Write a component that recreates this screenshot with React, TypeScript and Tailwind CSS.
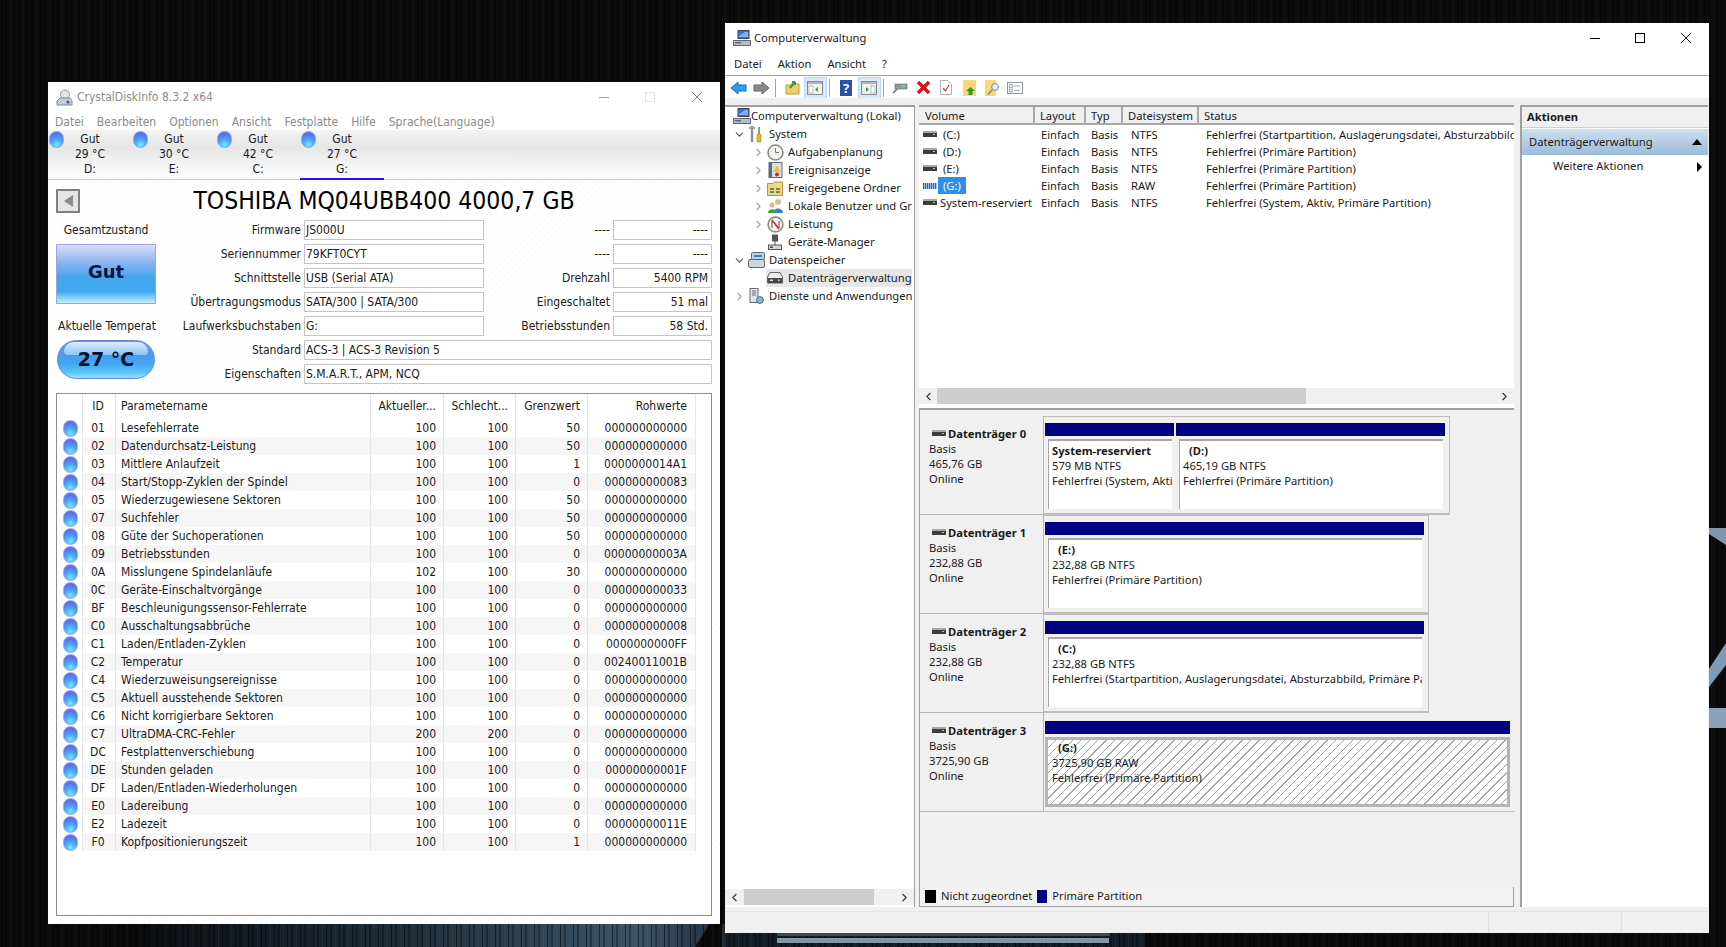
import type { ReactNode } from 'react';
import { ChevronDown, ChevronRight, ChevronLeft } from 'lucide-react';

type SmartRow = [string, string, string, string, string, string];

const smartRows: SmartRow[] = [
  ['01', 'Lesefehlerrate', '100', '100', '50', '000000000000'],
  ['02', 'Datendurchsatz-Leistung', '100', '100', '50', '000000000000'],
  ['03', 'Mittlere Anlaufzeit', '100', '100', '1', '0000000014A1'],
  ['04', 'Start/Stopp-Zyklen der Spindel', '100', '100', '0', '000000000083'],
  ['05', 'Wiederzugewiesene Sektoren', '100', '100', '50', '000000000000'],
  ['07', 'Suchfehler', '100', '100', '50', '000000000000'],
  ['08', 'Güte der Suchoperationen', '100', '100', '50', '000000000000'],
  ['09', 'Betriebsstunden', '100', '100', '0', '00000000003A'],
  ['0A', 'Misslungene Spindelanläufe', '102', '100', '30', '000000000000'],
  ['0C', 'Geräte-Einschaltvorgänge', '100', '100', '0', '000000000033'],
  ['BF', 'Beschleunigungssensor-Fehlerrate', '100', '100', '0', '000000000000'],
  ['C0', 'Ausschaltungsabbrüche', '100', '100', '0', '000000000008'],
  ['C1', 'Laden/Entladen-Zyklen', '100', '100', '0', '0000000000FF'],
  ['C2', 'Temperatur', '100', '100', '0', '00240011001B'],
  ['C4', 'Wiederzuweisungsereignisse', '100', '100', '0', '000000000000'],
  ['C5', 'Aktuell ausstehende Sektoren', '100', '100', '0', '000000000000'],
  ['C6', 'Nicht korrigierbare Sektoren', '100', '100', '0', '000000000000'],
  ['C7', 'UltraDMA-CRC-Fehler', '200', '200', '0', '000000000000'],
  ['DC', 'Festplattenverschiebung', '100', '100', '0', '000000000000'],
  ['DE', 'Stunden geladen', '100', '100', '0', '00000000001F'],
  ['DF', 'Laden/Entladen-Wiederholungen', '100', '100', '0', '000000000000'],
  ['E0', 'Ladereibung', '100', '100', '0', '000000000000'],
  ['E2', 'Ladezeit', '100', '100', '0', '00000000011E'],
  ['F0', 'Kopfpositionierungszeit', '100', '100', '1', '000000000000'],
];

const diskTabs = [
  ['29 °C', 'D:'],
  ['30 °C', 'E:'],
  ['42 °C', 'C:'],
  ['27 °C', 'G:'],
];

const volumes = [
  ['(C:)', 'NTFS', 'Fehlerfrei (Startpartition, Auslagerungsdatei, Absturzabbild, Primäre Partition)'],
  ['(D:)', 'NTFS', 'Fehlerfrei (Primäre Partition)'],
  ['(E:)', 'NTFS', 'Fehlerfrei (Primäre Partition)'],
  ['(G:)', 'RAW', 'Fehlerfrei (Primäre Partition)'],
  ['System-reserviert', 'NTFS', 'Fehlerfrei (System, Aktiv, Primäre Partition)'],
];

function Ball() {
  return (
    <span className="block w-[15px] h-[17px] rounded-full border border-[#8aa4ec] bg-[radial-gradient(circle_at_50%_85%,#7fe4ff_0%,#46a8f4_40%,#5a72ee_72%,#6a62e6_100%)]" />
  );
}

function HardDisk({ className = '' }: { className?: string }) {
  return (
    <svg width="14" height="7" viewBox="0 0 14 7" className={`shrink-0 ${className}`}>
      <rect x="0" y="0" width="14" height="2" fill="#a8a8a8" />
      <rect x="0" y="2" width="14" height="4" fill="#3c3c3c" />
      <rect x="10" y="3" width="2" height="1" fill="#8ee08e" />
    </svg>
  );
}

function Field({ value, right, className = '' }: { value: string; right?: boolean; className?: string }) {
  return (
    <div className={`h-5 border border-[#c4c4c4] bg-white px-[1px] leading-[18px] truncate ${right ? 'text-right' : ''} ${className}`}>
      {value}
    </div>
  );
}

function CrystalWindow() {
  const fieldRows = [
    ['Firmware', 'JS000U', '----', '----'],
    ['Seriennummer', '79KFT0CYT', '----', '----'],
    ['Schnittstelle', 'USB (Serial ATA)', 'Drehzahl', '5400 RPM'],
    ['Übertragungsmodus', 'SATA/300 | SATA/300', 'Eingeschaltet', '51 mal'],
    ['Laufwerksbuchstaben', 'G:', 'Betriebsstunden', '58 Std.'],
  ];
  return (
    <div className="absolute left-[48px] top-[82px] w-[672px] h-[842px] flex flex-col bg-white text-[12px] text-[#1a1a1a] font-['DejaVu_Sans_Condensed','Liberation_Sans',sans-serif]">
      <div className="h-[30px] shrink-0 flex items-center pl-[8px] pr-[17px] text-[#8c8c8c]">
        <svg width="17" height="17" viewBox="0 0 17 17" className="mr-[4px]">
          <circle cx="9" cy="5.5" r="4.5" fill="#dfe6ee" stroke="#8b98a8" />
          <path d="M1 16 V12 L4 9 H14 L16 12 V16 Z" fill="#c9cfd8" stroke="#7d8694" />
          <circle cx="12" cy="13" r="1.6" fill="#5b49c8" />
        </svg>
        <span>CrystalDiskInfo 8.3.2 x64</span>
        <span className="ml-auto flex items-center gap-[36px]">
          <span className="block w-[10px] h-px bg-[#9a9a9a]" />
          <span className="block w-[10px] h-[10px] border border-[#e4e4e4]" />
          <svg width="12" height="12" viewBox="0 0 12 12" stroke="#8a8a8a">
            <path d="M1 1 L11 11 M11 1 L1 11" />
          </svg>
        </span>
      </div>
      <div className="h-[18px] shrink-0 flex items-center gap-[13px] pl-[7px] pt-[1px] text-[#8a8a8a]">
        {['Datei', 'Bearbeiten', 'Optionen', 'Ansicht', 'Festplatte', 'Hilfe', 'Sprache(Language)'].map((m) => (
          <span key={m}>{m}</span>
        ))}
      </div>
      <div className="h-[50px] shrink-0 flex border-b border-[#c8c8c8] bg-[linear-gradient(#f4f4f4,#e6e6e6_35%,#f6f6f6_75%,#fbfbfb)]">
        {diskTabs.map(([temp, letter], i) => (
          <div key={letter} className={`relative w-[84px] h-[50px] flex flex-col items-center pt-[2px] leading-[15px] ${i === 3 ? 'border-b-2 border-[#2a10e8]' : ''}`}>
            <span className="absolute left-[1px] top-[1px]">
              <Ball />
            </span>
            <span>Gut</span>
            <span>{temp}</span>
            <span>{letter}</span>
          </div>
        ))}
      </div>
      <div className="flex-1 min-h-0 flex flex-col px-2 pb-2 bg-[repeating-linear-gradient(135deg,#ffffff_0,#ffffff_3px,#fbfbfb_3px,#fbfbfb_4px)]">
        <div className="grid grid-cols-[24px_1fr_24px] items-center h-6 mt-[8px]">
          <div className="w-6 h-6 border-2 border-[#808080] bg-[#e4e4e4] flex items-center justify-center">
            <span className="block border-y-[6px] border-r-[9px] border-y-transparent border-r-[#8a8a8a]" />
          </div>
          <div className="text-center text-[24.5px] leading-6 pt-[1px] whitespace-nowrap text-black">TOSHIBA MQ04UBB400 4000,7 GB</div>
        </div>
        <div className="flex mt-[8px]">
          <div className="w-[100px] shrink-0 flex flex-col items-center">
            <div className="h-5 leading-5">Gesamtzustand</div>
            <div className="mt-[4px] w-[100px] h-[60px] pb-[5px] border border-[#9aa6d8] flex items-center justify-center text-[18px] font-bold font-['DejaVu_Sans',sans-serif] text-[#0a1440] bg-[linear-gradient(#d8def8_0%,#8fb4f0_30%,#45a6ee_55%,#3fa8f0_80%,#c4ecff_100%)]">
              Gut
            </div>
            <div className="mt-[12px] h-5 leading-5 w-[100px] overflow-hidden whitespace-nowrap pl-[2px]">Aktuelle Temperatur</div>
            <div className="relative mt-[4px] w-[98px] h-[39px] rounded-[20px] border border-[#6f86d8] flex items-center justify-center text-[19px] font-bold font-['DejaVu_Sans',sans-serif] text-[#04102e] bg-[linear-gradient(#5a98ee_0%,#4a9cf0_40%,#3fa6f2_60%,#5cc4fa_85%,#9ae2ff_100%)]">
              <span className="absolute left-[6px] right-[6px] top-[1px] h-[13px] rounded-t-[14px] rounded-b-[5px] bg-[linear-gradient(#dcecfc,#8cc4f6)]" />
              <span className="relative">27 °C</span>
            </div>
          </div>
          <div className="flex-1 flex flex-col gap-1">
            {fieldRows.map(([label, value, label2, value2]) => (
              <div key={label} className="flex h-5 items-center">
                <div className="w-[145px] shrink-0 text-right whitespace-nowrap">{label}</div>
                <Field value={value} className="w-[180px] ml-[3px] shrink-0" />
                <div className="w-[126px] shrink-0 text-right whitespace-nowrap">{label2}</div>
                <Field value={value2} right className="w-[99px] ml-[3px] shrink-0 pr-[3px]" />
              </div>
            ))}
            {[
              ['Standard', 'ACS-3 | ACS-3 Revision 5'],
              ['Eigenschaften', 'S.M.A.R.T., APM, NCQ'],
            ].map(([label, value]) => (
              <div key={label} className="flex h-5 items-center">
                <div className="w-[145px] shrink-0 text-right">{label}</div>
                <Field value={value} className="flex-1 ml-[3px]" />
              </div>
            ))}
          </div>
        </div>
        <div className="mt-[9px] flex-1 min-h-0 border border-[#8c8c8c] bg-white">
          <div className="grid grid-cols-[25px_33px_255px_73px_72px_72px_109px] h-[25px] items-center leading-[25px]">
            <span />
            <span className="text-center pr-[2px] h-full border-l border-[#e6e6e6]">ID</span>
            <span className="h-full pl-[5px] border-l border-[#e6e6e6]">Parametername</span>
            <span className="h-full pr-[7px] text-right border-l border-[#e6e6e6] whitespace-nowrap">Aktueller...</span>
            <span className="h-full pr-[7px] text-right border-l border-[#e6e6e6] whitespace-nowrap">Schlecht...</span>
            <span className="h-full pr-[7px] text-right border-l border-[#e6e6e6]">Grenzwert</span>
            <span className="h-full pr-[8px] text-right border-x border-[#e6e6e6]">Rohwerte</span>
          </div>
          {smartRows.map(([id, name, cur, worst, limit, raw], i) => (
            <div key={id} className="grid grid-cols-[25px_33px_255px_73px_72px_72px_109px] h-[18px] leading-[18px]">
              <span className="flex items-center justify-center pl-[1px]">
                <Ball />
              </span>
              <span className={`text-center pr-[2px] border-l border-[#e6e6e6] ${i % 2 ? 'bg-[#f6f6f6]' : ''}`}>{id}</span>
              <span className={`pl-[5px] border-l border-[#e6e6e6] whitespace-nowrap ${i % 2 ? 'bg-[#f6f6f6]' : ''}`}>{name}</span>
              <span className={`pr-[7px] text-right border-l border-[#e6e6e6] ${i % 2 ? 'bg-[#f6f6f6]' : ''}`}>{cur}</span>
              <span className={`pr-[7px] text-right border-l border-[#e6e6e6] ${i % 2 ? 'bg-[#f6f6f6]' : ''}`}>{worst}</span>
              <span className={`pr-[7px] text-right border-l border-[#e6e6e6] ${i % 2 ? 'bg-[#f6f6f6]' : ''}`}>{limit}</span>
              <span className={`pr-[8px] text-right border-x border-[#e6e6e6] ${i % 2 ? 'bg-[#f6f6f6]' : ''}`}>{raw}</span>
            </div>
          ))}
        </div>
      </div>
    </div>
  );
}

function ToolSlot({ children, active }: { children: ReactNode; active?: boolean }) {
  return (
    <span className={`w-[23px] h-[22px] shrink-0 flex items-center justify-center ${active ? 'bg-[#d8eafa] border border-[#b8d8f4]' : ''}`}>
      {children}
    </span>
  );
}

function ToolDivider() {
  return <span className="block w-px h-[18px] ml-[2px] mr-[5px] bg-[#a8a8a8] shrink-0" />;
}

function PaneIcon({ flip }: { flip?: boolean }) {
  return (
    <svg width="16" height="14" viewBox="0 0 16 14">
      <rect x="0.5" y="0.5" width="15" height="13" fill="#f2f2f2" stroke="#8a8a8a" />
      <rect x="1" y="1" width="14" height="2" fill="#b4b4b4" />
      <rect x={flip ? 10 : 2} y="5" width="4" height="7" fill="#fff" stroke="#8a9a8a" strokeWidth="0.6" />
      <path d={flip ? 'M5 6 L8 8.5 L5 11 Z' : 'M11 6 L8 8.5 L11 11 Z'} fill="#3a9a3a" />
    </svg>
  );
}

function Toolbar() {
  return (
    <div className="h-[23px] shrink-0 flex items-center pl-[1.5px] pt-[1px] border-t border-[#a0a0a0]">
      <ToolSlot>
        <svg width="17" height="14" viewBox="0 0 17 14">
          <path d="M1 7 L8 1 V4 H16 V10 H8 V13 Z" fill="#2f9cf0" stroke="#1a6ab0" />
        </svg>
      </ToolSlot>
      <ToolSlot>
        <svg width="17" height="14" viewBox="0 0 17 14">
          <path d="M16 7 L9 1 V4 H1 V10 H9 V13 Z" fill="#8a8a8a" stroke="#666" />
        </svg>
      </ToolSlot>
      <ToolDivider />
      <ToolSlot>
        <svg width="15" height="15" viewBox="0 0 15 15">
          <path d="M1 5 H5 L6 4 H14 V14 H1 Z" fill="#f2cc72" stroke="#c49a3a" />
          <path d="M5 8 L10 2 M10 2 L7 2 M10 2 L10 5" stroke="#3f9a2f" strokeWidth="2" fill="none" />
        </svg>
      </ToolSlot>
      <ToolSlot active>
        <PaneIcon />
      </ToolSlot>
      <ToolDivider />
      <ToolSlot>
        <span className="w-[12px] h-[16px] bg-[#2c4fa8] text-white text-[13px] font-bold leading-[16px] text-center">?</span>
      </ToolSlot>
      <ToolSlot active>
        <PaneIcon flip />
      </ToolSlot>
      <ToolDivider />
      <ToolSlot>
        <svg width="16" height="13" viewBox="0 0 16 13">
          <rect x="3" y="3" width="12" height="5" fill="#8f9a9f" stroke="#667" strokeWidth="0.6" />
          <rect x="10" y="4" width="3" height="2" fill="#6fdc6f" />
          <path d="M1 12 L5 8" stroke="#666" strokeWidth="1.4" />
        </svg>
      </ToolSlot>
      <ToolSlot>
        <svg width="15" height="15" viewBox="0 0 15 15">
          <path d="M2 2 L13 13 M13 2 L2 13" stroke="#d01818" strokeWidth="3.4" />
        </svg>
      </ToolSlot>
      <ToolSlot>
        <svg width="12" height="15" viewBox="0 0 12 15">
          <path d="M0.5 0.5 H8 L11.5 4 V14.5 H0.5 Z" fill="#fff" stroke="#b0b0b0" />
          <path d="M3 8 L5.5 11 L9 5" stroke="#d04040" strokeWidth="1.2" fill="none" />
        </svg>
      </ToolSlot>
      <ToolSlot>
        <svg width="13" height="16" viewBox="0 0 13 16">
          <rect x="0" y="0" width="13" height="16" fill="#f6d878" />
          <path d="M7.5 7 L12 11 H9.5 V15 H5.5 V11 H3 Z" fill="#2f9a2f" />
        </svg>
      </ToolSlot>
      <ToolSlot>
        <svg width="15" height="16" viewBox="0 0 15 16">
          <rect x="0" y="0" width="11" height="16" fill="#f6d878" />
          <circle cx="10" cy="7" r="3.4" fill="#e6f0f6" stroke="#7a8a94" />
          <path d="M7.5 9.5 L3 14.5" stroke="#7a8a94" strokeWidth="1.6" />
        </svg>
      </ToolSlot>
      <ToolSlot>
        <svg width="16" height="12" viewBox="0 0 16 12">
          <rect x="0.5" y="0.5" width="15" height="11" fill="#fff" stroke="#8a98a4" />
          <rect x="2.5" y="2.5" width="3" height="3" fill="#dfeaf6" stroke="#6a88aa" strokeWidth="0.6" />
          <rect x="2.5" y="7" width="3" height="3" fill="#dfeaf6" stroke="#6a88aa" strokeWidth="0.6" />
          <path d="M7 4 H13 M7 8.5 H13" stroke="#a0a8b0" />
        </svg>
      </ToolSlot>
    </div>
  );
}

function TreeIcon({ kind }: { kind: string }) {
  switch (kind) {
    case 'computer':
      return (
        <svg width="18" height="16" viewBox="0 0 18 16">
          <rect x="5" y="0.5" width="11" height="8" fill="#3f6ed0" stroke="#445" />
          <path d="M6 6 L12 2 L15 2 V7 H6 Z" fill="#79b4f0" />
          <rect x="0.5" y="10.5" width="17" height="5" fill="#b8bcc4" stroke="#667" />
          <rect x="2" y="12" width="6" height="1.5" fill="#667" />
        </svg>
      );
    case 'tools':
      return (
        <svg width="14" height="17" viewBox="0 0 14 17">
          <path d="M3 2 V16" stroke="#8a8f96" strokeWidth="2.4" />
          <path d="M0.5 3 C1 0 5 0 5.5 3" stroke="#8a8f96" strokeWidth="1.4" fill="none" />
          <path d="M10 1 V8" stroke="#555" strokeWidth="1.2" />
          <rect x="8" y="8" width="4" height="8" rx="1" fill="#efb81c" stroke="#a07a10" strokeWidth="0.6" />
        </svg>
      );
    case 'clock':
      return (
        <svg width="17" height="17" viewBox="0 0 17 17">
          <circle cx="8.5" cy="8.5" r="7.5" fill="#f2f2ee" stroke="#8a8a86" strokeWidth="1.6" />
          <path d="M8.5 4 V8.5 H12" stroke="#77776f" fill="none" />
        </svg>
      );
    case 'log':
      return (
        <svg width="15" height="16" viewBox="0 0 15 16">
          <rect x="1" y="0.5" width="13" height="15" fill="#d8dfe6" stroke="#5b6b7b" />
          <rect x="1" y="0.5" width="3" height="15" fill="#5b6b7b" />
          <path d="M9 3 L12.5 10 H5.5 Z" fill="#efc21c" />
          <circle cx="9" cy="12.5" r="2" fill="#c83030" />
        </svg>
      );
    case 'share':
      return (
        <svg width="16" height="16" viewBox="0 0 16 16">
          <path d="M0.5 3.5 H6 L7 2 H15.5 V15.5 H0.5 Z" fill="#f3d688" stroke="#b8923c" />
          <path d="M3 9 H7 M3 12 H7 M9 9 H13 M9 12 H13" stroke="#2d7a3a" strokeWidth="1.6" />
        </svg>
      );
    case 'users':
      return (
        <svg width="17" height="16" viewBox="0 0 17 16">
          <circle cx="11" cy="4" r="3" fill="#e9b88c" />
          <path d="M6 15 C6 9 16 9 16 15 Z" fill="#3a80c8" />
          <circle cx="5" cy="7" r="2.6" fill="#e9b88c" />
          <path d="M1 15 C1 10 9 10 9 15 Z" fill="#3f9a4a" />
        </svg>
      );
    case 'perf':
      return (
        <svg width="17" height="17" viewBox="0 0 17 17">
          <circle cx="8.5" cy="8.5" r="7.4" fill="#f6f6f2" stroke="#8a8a86" strokeWidth="1.6" />
          <path d="M5 4 L12 13" stroke="#c82828" strokeWidth="1.6" />
          <path d="M5 12 V5 M12 12 V5" stroke="#44505c" />
        </svg>
      );
    case 'device':
      return (
        <svg width="14" height="16" viewBox="0 0 14 16">
          <rect x="4" y="0.5" width="6" height="7" fill="#555" />
          <path d="M7 7 V11" stroke="#555" />
          <rect x="0.5" y="11" width="13" height="4.5" fill="#d6d6d6" stroke="#555" />
          <rect x="2" y="12.5" width="3" height="1.5" fill="#444" />
        </svg>
      );
    case 'storage':
      return (
        <svg width="17" height="16" viewBox="0 0 17 16">
          <rect x="0.5" y="7.5" width="16" height="8" rx="1.5" fill="#cfd6dc" stroke="#5c6670" />
          <rect x="3.5" y="0.5" width="13" height="7" rx="1" fill="#b8d4ea" stroke="#5c6670" />
          <rect x="6" y="3" width="8" height="2" fill="#3a86c8" />
        </svg>
      );
    case 'disk':
      return (
        <svg width="16" height="12" viewBox="0 0 16 12">
          <path d="M0.5 5 L3 0.5 H13 L15.5 5 V11 H0.5 Z" fill="#eeeeee" stroke="#666" />
          <rect x="1" y="6" width="14" height="5" fill="#46484c" />
          <rect x="3" y="7.5" width="3" height="1.5" fill="#ddd" />
          <rect x="11" y="7.5" width="2" height="1.5" fill="#8edc8e" />
        </svg>
      );
    default:
      return (
        <svg width="15" height="17" viewBox="0 0 15 17">
          <rect x="1" y="0.5" width="8" height="14" fill="#e0e4e8" stroke="#66707a" />
          <path d="M3 3 H7 M3 5 H7 M3 7 H7" stroke="#66707a" />
          <circle cx="11" cy="12" r="3.4" fill="#8fb4d4" stroke="#3a6a94" />
        </svg>
      );
  }
}

const treeRows = [
  { label: 'Computerverwaltung (Lokal)', icon: 'computer', level: 0, arrow: '' },
  { label: 'System', icon: 'tools', level: 1, arrow: 'open' },
  { label: 'Aufgabenplanung', icon: 'clock', level: 2, arrow: 'closed' },
  { label: 'Ereignisanzeige', icon: 'log', level: 2, arrow: 'closed' },
  { label: 'Freigegebene Ordner', icon: 'share', level: 2, arrow: 'closed' },
  { label: 'Lokale Benutzer und Gruppen', icon: 'users', level: 2, arrow: 'closed' },
  { label: 'Leistung', icon: 'perf', level: 2, arrow: 'closed' },
  { label: 'Geräte-Manager', icon: 'device', level: 2, arrow: '' },
  { label: 'Datenspeicher', icon: 'storage', level: 1, arrow: 'open' },
  { label: 'Datenträgerverwaltung', icon: 'disk', level: 2, arrow: '', selected: true },
  { label: 'Dienste und Anwendungen', icon: 'services', level: 1, arrow: 'closed' },
];

function TreePane() {
  return (
    <div className="w-[190px] shrink-0 flex flex-col bg-white border-r border-[#a0a0a0] border-t-2 border-t-[#a0a0a0]">
      <div className="flex-1 min-h-0 overflow-hidden">
        {treeRows.map((row) => (
          <div key={row.label} className="h-[18px] flex items-center whitespace-nowrap" style={{ paddingLeft: row.level === 2 ? 27 : 8 }}>
            {row.level > 0 && (
              <span className="w-[14px] shrink-0 flex items-center">
                {row.arrow === 'open' && <ChevronDown size={13} color="#555" strokeWidth={2} />}
                {row.arrow === 'closed' && <ChevronRight size={13} color="#a6a6a6" strokeWidth={2} />}
              </span>
            )}
            <span className={`flex items-center min-w-0 flex-1 overflow-hidden mr-[2px] h-full ${row.selected ? 'bg-[#e6e6e6]' : ''}`}>
              <span className={`shrink-0 flex justify-center ${row.level === 0 ? 'w-[18px]' : 'w-[18px] mr-[4px]'}`}>
                <TreeIcon kind={row.icon} />
              </span>
              <span>{row.label}</span>
            </span>
          </div>
        ))}
      </div>
      <div className="h-[16px] mb-[2px] shrink-0 flex items-center bg-[#f0f0f0] px-[3px]">
        <ChevronLeft size={13} color="#333" />
        <span className="block ml-[3px] w-[130px] h-full bg-[#cdcdcd]" />
        <ChevronRight size={13} color="#333" className="ml-auto" />
      </div>
    </div>
  );
}

function VolumeList() {
  return (
    <div className="h-[303px] shrink-0 flex flex-col bg-white border-t-2 border-t-[#a0a0a0]">
      <div className="h-[18px] shrink-0 grid grid-cols-[116px_51px_37px_76px_1fr] bg-[#f0f0f0] border-b-2 border-[#a8a8a8] leading-[17px]">
        <span className="pl-[6px] border-r-2 border-[#a8a8a8]">Volume</span>
        <span className="pl-[5px] border-r-2 border-[#a8a8a8]">Layout</span>
        <span className="pl-[5px] border-r-2 border-[#a8a8a8]">Typ</span>
        <span className="pl-[5px] border-r-2 border-[#a8a8a8]">Dateisystem</span>
        <span className="pl-[5px]">Status</span>
      </div>
      <div className="flex-1 min-h-0 pt-[1px]">
        {volumes.map(([name, fs, status]) => (
          <div key={name} className="h-[17px] grid grid-cols-[116px_51px_38px_76px_1fr] leading-[17px] whitespace-nowrap overflow-hidden">
            <span className="flex items-center pl-[4px] overflow-hidden">
              {name === '(G:)' ? (
                <span className="block w-[14px] h-[6px] bg-[repeating-linear-gradient(90deg,#2a5fc0_0,#2a5fc0_1px,#9fc2ee_1px,#9fc2ee_2px)]" />
              ) : (
                <HardDisk />
              )}
              {name.startsWith('(') ? (
                <span className={`ml-[1px] px-[5px] ${name === '(G:)' ? 'bg-[#2f8fe8] text-white' : ''}`}>{name}</span>
              ) : (
                <span className="ml-[3px]">{name}</span>
              )}
            </span>
            <span className="pl-[6px]">Einfach</span>
            <span className="pl-[5px]">Basis</span>
            <span className="pl-[7px]">{fs}</span>
            <span className="pl-[6px] overflow-hidden">{status}</span>
          </div>
        ))}
      </div>
      <div className="h-[16px] mb-[4px] shrink-0 flex items-center bg-[#f0f0f0] px-[3px]">
        <ChevronLeft size={13} color="#333" />
        <span className="block ml-[2px] w-[369px] h-full bg-[#cdcdcd]" />
        <ChevronRight size={13} color="#333" className="ml-auto" />
      </div>
    </div>
  );
}

function DiskInfo({ name, size }: { name: string; size: string }) {
  return (
    <div className="w-[124px] shrink-0 h-full pl-[9px] pt-[10px] border-b border-r border-[#b4b4b4] leading-[15px]">
      <div className="flex items-center font-bold">
        <HardDisk className="ml-[3px] mr-[2px]" />
        {name}
      </div>
      <div>Basis</div>
      <div>{size}</div>
      <div>Online</div>
    </div>
  );
}

function Partition({ title, lines, bold, className = '', raw }: { title: string; lines: string[]; bold?: boolean; className?: string; raw?: boolean }) {
  return (
    <div className={`flex flex-col min-w-0 ${className}`}>
      <div className="h-[13px] shrink-0 bg-[#000080]" />
      {raw ? (
        <div className="mt-[3px] h-[70px] border-[3px] border-[#b4b4b4] pl-[4px] leading-[15px] whitespace-nowrap overflow-hidden bg-[repeating-linear-gradient(135deg,#ffffff_0,#ffffff_5px,#a4a4a4_5px,#a4a4a4_6px)]">
          <div className="font-bold pl-[6px]">{title}</div>
          {lines.map((l) => (
            <div key={l}>{l}</div>
          ))}
        </div>
      ) : (
        <div className="mt-[3px] h-[70px] ml-[3px] mr-[2px] border-t-2 border-l border-[#a8a8a8] bg-white pl-[3px] pt-[2px] leading-[15px] whitespace-nowrap overflow-hidden">
          <div className={`font-bold ${bold ? '' : 'pl-[6px]'}`}>{title}</div>
          {lines.map((l) => (
            <div key={l}>{l}</div>
          ))}
        </div>
      )}
    </div>
  );
}

function DiskMap() {
  const rowClass = 'h-[99px] shrink-0 flex';
  const boxClass = 'h-[99px] border-y border-r border-[#bdbdbd] pt-[6px] pb-[4px] pr-[4px] pl-[1px] border-b-2';
  return (
    <div className="flex-1 min-h-0 flex flex-col bg-[#f0f0f0] pt-[6px] border-t-2 border-t-[#a0a0a0] border-l border-l-[#a0a0a0]">
      <div className={rowClass}>
        <DiskInfo name="Datenträger 0" size="465,76 GB" />
        <div className={`${boxClass} w-[406px] flex gap-[2px]`}>
          <Partition title="System-reserviert" bold lines={['579 MB NTFS', 'Fehlerfrei (System, Aktiv, Primäre Partition)']} className="w-[129px]" />
          <Partition title="(D:)" lines={['465,19 GB NTFS', 'Fehlerfrei (Primäre Partition)']} className="flex-1" />
        </div>
      </div>
      <div className={rowClass}>
        <DiskInfo name="Datenträger 1" size="232,88 GB" />
        <div className={`${boxClass} w-[385px]`}>
          <Partition title="(E:)" lines={['232,88 GB NTFS', 'Fehlerfrei (Primäre Partition)']} />
        </div>
      </div>
      <div className={rowClass}>
        <DiskInfo name="Datenträger 2" size="232,88 GB" />
        <div className={`${boxClass} w-[385px]`}>
          <Partition title="(C:)" lines={['232,88 GB NTFS', 'Fehlerfrei (Startpartition, Auslagerungsdatei, Absturzabbild, Primäre Partition)']} />
        </div>
      </div>
      <div className={rowClass}>
        <DiskInfo name="Datenträger 3" size="3725,90 GB" />
        <div className="h-[99px] flex-1 border-b border-[#bdbdbd] pt-[8px] pl-[1px] pr-[4px]">
          <Partition title="(G:)" raw lines={['3725,90 GB RAW', 'Fehlerfrei (Primäre Partition)']} />
        </div>
      </div>
      <div className="flex-1" />
      <div className="h-[20px] shrink-0 flex items-center pl-[5px] border-b border-r border-[#a0a0a0] bg-[#f2f2f2]">
        <span className="block w-[11px] h-[13px] bg-black mr-[5px]" />
        <span>Nicht zugeordnet</span>
        <span className="block w-[10px] h-[13px] bg-[#000080] ml-[5px] mr-[5px]" />
        <span>Primäre Partition</span>
      </div>
    </div>
  );
}

function ManagementWindow() {
  return (
    <div className="absolute left-[725px] top-[23px] w-[984px] h-[910px] flex flex-col bg-white text-[11.2px] text-[#1a1a1a] font-['Noto_Sans','Liberation_Sans',sans-serif]">
      <div className="h-[30px] shrink-0 flex items-center pl-[8px] pr-[17px]">
        <TreeIcon kind="computer" />
        <span className="ml-[3px]">Computerverwaltung</span>
        <span className="ml-auto flex items-center gap-[35px]">
          <span className="block w-[10px] h-px bg-black" />
          <span className="block w-[10px] h-[10px] border border-black" />
          <svg width="12" height="12" viewBox="0 0 12 12" stroke="#222">
            <path d="M1 1 L11 11 M11 1 L1 11" />
          </svg>
        </span>
      </div>
      <div className="h-[22px] shrink-0 flex items-center gap-[16px] pl-[9px]">
        {['Datei', 'Aktion', 'Ansicht', '?'].map((m) => (
          <span key={m}>{m}</span>
        ))}
      </div>
      <Toolbar />
      <div className="flex-1 min-h-0 flex flex-col bg-[#f0f0f0] pt-[7px]">
        <div className="h-[802px] shrink-0 flex">
          <TreePane />
          <div className="w-[595px] shrink-0 ml-[4px] flex flex-col">
            <VolumeList />
            <DiskMap />
          </div>
          <div className="ml-[6px] w-[188px] shrink-0 flex flex-col bg-white border-l-2 border-t-2 border-[#a0a0a0]">
            <div className="h-[21px] shrink-0 flex items-center pl-[5px] pt-[1px] bg-[#f0f0f0] font-bold border-b border-[#d0d0d0]">Aktionen</div>
            <div className="h-[26px] mt-[1px] shrink-0 flex items-center pl-[7px] pr-[6px] bg-[linear-gradient(#cfdfee,#9dbbd8)]">
              <span>Datenträgerverwaltung</span>
              <span className="ml-auto block border-x-[5px] border-b-[6px] border-x-transparent border-b-black" />
            </div>
            <div className="h-[23px] shrink-0 flex items-center pl-[31px] pr-[6px]">
              <span>Weitere Aktionen</span>
              <span className="ml-auto block border-y-[5px] border-l-[5px] border-y-transparent border-l-black" />
            </div>
          </div>
        </div>
        <div className="mt-[4px] flex-1 flex border-t border-[#e4e4e4]">
          <span className="w-[763px]" />
          <span className="w-[133px] border-l border-[#e0e0e0]" />
          <span className="flex-1 border-l border-[#e0e0e0]" />
        </div>
      </div>
    </div>
  );
}

// wallpaper peeking out around the two windows
function Wallpaper() {
  return (
    <svg width="1726" height="947" viewBox="0 0 1726 947" className="absolute inset-0">
      <defs>
        <pattern id="streaks" width="13" height="947" patternUnits="userSpaceOnUse">
          <rect x="1" width="1" height="947" fill="#000" opacity="0.5" />
          <rect x="5" width="2" height="947" fill="#000" opacity="0.3" />
          <rect x="10" width="1" height="947" fill="#fff" opacity="0.03" />
        </pattern>
        <linearGradient id="bottomGlow" x1="0" x2="1" y1="0" y2="0">
          <stop offset="0" stopColor="#0c0f12" />
          <stop offset="0.45" stopColor="#202e3a" />
          <stop offset="0.85" stopColor="#3c5468" />
          <stop offset="1" stopColor="#1e2c38" />
        </linearGradient>
      </defs>
      <rect x="150" y="924" width="575" height="23" fill="url(#bottomGlow)" />
      <path d="M695 947 L722 905 V947 Z" fill="#0a0a0a" />
      <rect x="725" y="933" width="420" height="14" fill="#141d26" />
      <rect width="1726" height="947" fill="url(#streaks)" />
      <rect x="777" y="938" width="332" height="5" fill="#8697a6" />
      <path d="M777 933 H1110 V936 H777 Z" fill="#3c4a56" />
      <path d="M1709 528 H1726 V545 L1709 534 Z" fill="#8198b0" />
      <path d="M1709 669 L1726 643 V665 L1709 687 Z" fill="#7f9ab8" />
      <rect x="1709" y="708" width="17" height="20" fill="#8aa2ba" />
    </svg>
  );
}

export default function App() {
  return (
    <div className="relative w-[1726px] h-[947px] overflow-hidden bg-[#0b0b0b]">
      <Wallpaper />
      <CrystalWindow />
      <ManagementWindow />
    </div>
  );
}
